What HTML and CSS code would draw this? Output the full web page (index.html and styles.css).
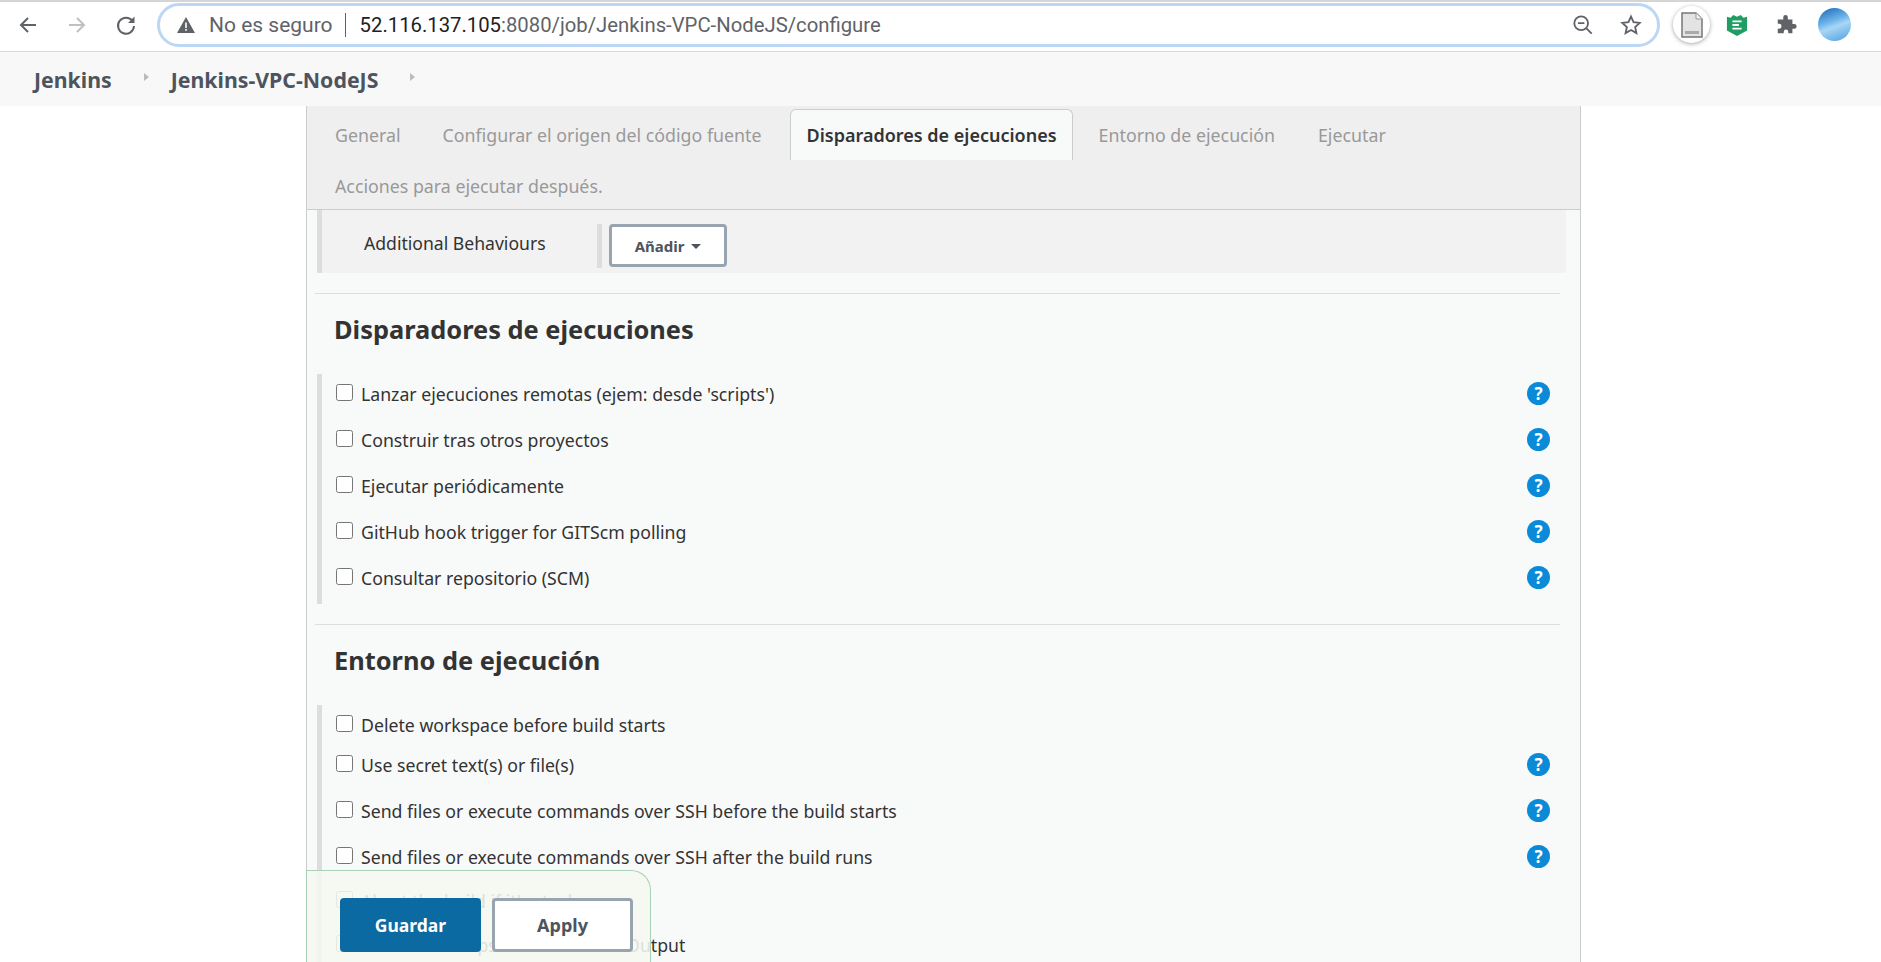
FILE: index.html
```html
<!DOCTYPE html>
<html lang="en">

<head>
    <meta charset="UTF-8">
    <meta name="viewport" content="width=device-width, initial-scale=1.0">
    <title>Jenkins-VPC-NodeJS Config</title>
    <link rel="stylesheet" href="styles.css">
</head>

<body>

    <!-- Browser toolbar -->
    <div class="toolbar">
        <svg class="nav-icon" viewBox="0 0 24 24"><path d="M20 12H5M12 5l-7 7 7 7" fill="none" stroke="#5f6368" stroke-width="2"/></svg>
        <svg class="nav-icon" viewBox="0 0 24 24"><path d="M4 12h15M12 5l7 7-7 7" fill="none" stroke="#bdc1c6" stroke-width="2"/></svg>
        <svg class="nav-icon" viewBox="0 0 24 24"><path d="M18.5 8A8 8 0 1 0 20 13" fill="none" stroke="#5f6368" stroke-width="2"/><path d="M20.5 3.5v6.5H14z" fill="#5f6368"/></svg>

        <div class="omnibox">
            <svg class="warn-icon" viewBox="0 0 20 18"><path d="M10 1l9 16H1z" fill="#5f6368"/><path d="M9.2 6.5h1.6v5.5H9.2zM9.2 13h1.6v1.7H9.2z" fill="#fff"/></svg>
            <span class="not-secure">No es seguro</span>
            <span class="omni-sep"></span>
            <span class="url"><b>52.116.137.105</b>:8080/job/Jenkins-VPC-NodeJS/configure</span>
            <svg class="omni-icon zoom-icon" viewBox="0 0 24 24"><circle cx="10" cy="10" r="7.5" fill="none" stroke="#5f6368" stroke-width="2"/><path d="M6.5 10h7M15.5 15.5l6 6" fill="none" stroke="#5f6368" stroke-width="2"/></svg>
            <svg class="omni-icon" viewBox="0 0 24 24"><path d="M12 2.8l2.8 6.2 6.7.7-5 4.5 1.4 6.6-5.9-3.4-5.9 3.4 1.4-6.6-5-4.5 6.700-.7z" fill="none" stroke="#5f6368" stroke-width="2"/></svg>
        </div>

        <div class="ext-bubble">
            <svg class="ext-doc" viewBox="0 0 22 26"><path d="M1 1h14l6 6v18H1z" fill="#e3e3e3" stroke="#777" stroke-width="1.5"/><path d="M15 1v6h6" fill="#f2f2f2" stroke="#999"/><path d="M4 19h14v3H4z" fill="#aaa"/></svg>
        </div>
        <svg class="ext-icon" viewBox="0 0 24 26"><path d="M1 4l4 1 3-3 4 2 4-2 3 3 4-1v15l-11 6-11-6z" fill="#1f9d63"/><path d="M7 9h10M7 13h7M7 17h10" stroke="#fff" stroke-width="2"/></svg>
        <svg class="ext-icon puzzle" viewBox="0 0 24 24"><path d="M9 3.5a2.5 2.5 0 0 1 5 0V6h5v5h2a2.6 2.6 0 0 1 0 5.200h-2V21h-4.500v-1.500a2.500 2.500 0 0 0-5 0V21H3v-5h1.500a2.700 2.700 0 0 0 0-5.400H3V6h6z" fill="#5f6368"/></svg>
        <div class="avatar"></div>
    </div>

    <!-- Jenkins breadcrumbs -->
    <div class="breadcrumbs">
        <a class="crumb">Jenkins</a>
        <span class="crumb-arrow"></span>
        <a class="crumb">Jenkins-VPC-NodeJS</a>
        <span class="crumb-arrow"></span>
    </div>

    <div class="config-panel">
        <div class="tabs">
            <a class="tab">General</a>
            <a class="tab">Configurar el origen del código fuente</a>
            <a class="tab active">Disparadores de ejecuciones</a>
            <a class="tab">Entorno de ejecución</a>
            <a class="tab">Ejecutar</a>
            <a class="tab">Acciones para ejecutar después.</a>
        </div>

        <div class="behaviours">
            <span class="behaviours-label">Additional Behaviours</span>
            <div class="behaviours-action">
                <button class="btn-add">Añadir <span class="caret"></span></button>
            </div>
        </div>

        <div class="section first">
            <h2>Disparadores de ejecuciones</h2>
            <div class="options">
                <label class="option"><input type="checkbox"><span>Lanzar ejecuciones remotas (ejem: desde 'scripts')</span><i class="help">?</i></label>
                <label class="option"><input type="checkbox"><span>Construir tras otros proyectos</span><i class="help">?</i></label>
                <label class="option"><input type="checkbox"><span>Ejecutar periódicamente</span><i class="help">?</i></label>
                <label class="option"><input type="checkbox"><span>GitHub hook trigger for GITScm polling</span><i class="help">?</i></label>
                <label class="option"><input type="checkbox"><span>Consultar repositorio (SCM)</span><i class="help">?</i></label>
            </div>
        </div>

        <div class="section second">
            <h2>Entorno de ejecución</h2>
            <div class="options">
                <label class="option short"><input type="checkbox"><span>Delete workspace before build starts</span></label>
                <label class="option"><input type="checkbox"><span>Use secret text(s) or file(s)</span><i class="help">?</i></label>
                <label class="option"><input type="checkbox"><span>Send files or execute commands over SSH before the build starts</span><i class="help">?</i></label>
                <label class="option"><input type="checkbox"><span>Send files or execute commands over SSH after the build runs</span><i class="help">?</i></label>
                <label class="option tight"><input type="checkbox"><span>Abort the build if it's stuck</span></label>
                <label class="option"><input type="checkbox"><span>Add timestamps to the Console Output</span></label>
            </div>
        </div>
    </div>

    <!-- Sticky save bar over the form -->
    <div class="save-bar">
        <button class="btn-save">Guardar</button>
        <button class="btn-apply">Apply</button>
    </div>

</body>

</html>
```

FILE: styles.css
```css
html,
body {
    height: 962px;
    overflow: hidden;
}

body {
    margin: 0;
    background-color: white;
    font-family: "Noto Sans", sans-serif;
    color: #333;
    position: relative;
}

/* Browser toolbar */
.toolbar {
    height: 52px;
    padding-bottom: 4px;
    box-sizing: border-box;
    border-top: 2px solid #d5d5d5;
    border-bottom: 1px solid #d9d9d9;
    display: flex;
    align-items: center;
    padding-left: 16px;
    background-color: white;
}

.nav-icon {
    width: 24px;
    height: 24px;
    margin-right: 25px;
}

.omnibox {
    width: 1481px;
    height: 38px;
    margin-left: -6px;
    border: 3px solid #bcd7f6;
    border-radius: 22px;
    display: flex;
    align-items: center;
    padding-left: 16px;
    box-sizing: content-box;
    font-family: "Roboto", sans-serif;
    font-size: 20.3px;
}

.warn-icon {
    width: 20px;
    height: 18px;
    margin-right: 13px;
}

.not-secure {
    color: #5f6368;
    font-size: 21px;
}

.omni-sep {
    width: 1px;
    height: 24px;
    background-color: #5f6368;
    margin: 0 14px 0 12px;
}

.url {
    color: #5f6368;
    flex: 1;
}

.url b {
    color: #202124;
    font-weight: normal;
}

.omni-icon {
    width: 22px;
    height: 22px;
    margin-right: 15px;
}

.zoom-icon {
    margin-right: 26px;
}

.ext-bubble {
    width: 37px;
    height: 37px;
    margin-left: 13px;
    border-radius: 50%;
    box-shadow: 0 1px 4px rgba(0, 0, 0, 0.35);
    display: flex;
    align-items: center;
    justify-content: center;
}

.ext-doc {
    width: 22px;
    height: 26px;
}

.ext-icon {
    width: 22px;
    height: 24px;
    margin-left: 16px;
}

.ext-icon.puzzle {
    margin-left: 27px;
}

.avatar {
    width: 33px;
    height: 33px;
    margin-left: 21px;
    border-radius: 50%;
    background: linear-gradient(160deg, #1565b5 0%, #6db4ea 40%, #a9d6f5 55%, #4a9fe0 100%);
}

/* Breadcrumbs */
.breadcrumbs {
    height: 54px;
    background-color: #f8f8f8;
    display: flex;
    align-items: center;
    padding-left: 34px;
    box-sizing: border-box;
}

.crumb {
    font-size: 21.3px;
    font-weight: bold;
    color: #4d545d;
    margin-top: 1px;
}

.crumb-arrow {
    width: 0;
    height: 0;
    border-left: 5px solid #bbb;
    border-top: 4px solid transparent;
    border-bottom: 4px solid transparent;
    margin: -4px 22px 0 32px;
}

/* Config form */
.config-panel {
    width: 1273px;
    height: 860px;
    margin-left: 306px;
    border-left: 1px solid #ccc;
    border-right: 1px solid #ccc;
    background-color: #f8fafa;
}

.tabs {
    height: 104px;
    background-color: #efefef;
    border-bottom: 1px solid #ccc;
    display: flex;
    flex-wrap: wrap;
    align-content: flex-start;
    padding: 3px 0 0 12px;
    box-sizing: border-box;
}

.tab {
    height: 51px;
    line-height: 50px;
    padding: 0 15px;
    margin-right: 12px;
    font-size: 17.8px;
    color: #999;
    border: 1px solid transparent;
    border-bottom: none;
    box-sizing: border-box;
}

.tab:nth-child(1) {
    margin-right: 10px;
}

.tab:nth-child(2) {
    margin-right: 13px;
}

.tab:nth-child(4) {
    margin-right: 11px;
}

.tab.active {
    background-color: #f8fafa;
    border-color: #ccc;
    border-radius: 6px 6px 0 0;
    color: #333;
    font-size: 18px;
    font-weight: 600;
    margin-right: 10px;
}

.behaviours {
    width: 1249px;
    height: 63px;
    margin-left: 10px;
    background-color: #f2f2f2;
    border-left: 5px solid #ddd;
    box-sizing: border-box;
    display: flex;
}

.behaviours-label {
    width: 275px;
    padding: 21px 0 0 42px;
    box-sizing: border-box;
    font-size: 17.6px;
}

.behaviours-action {
    border-left: 5px solid #ddd;
    height: 44px;
    margin-top: 14px;
    padding-left: 7px;
}

.btn-add {
    width: 118px;
    height: 43px;
    background-color: white;
    border: 3px solid #98a5b1;
    border-radius: 4px;
    font-family: inherit;
    font-size: 15px;
    font-weight: bold;
    color: #4d545d;
    padding: 0;
}

.caret {
    display: inline-block;
    width: 0;
    height: 0;
    border-top: 5px solid #4d545d;
    border-left: 5px solid transparent;
    border-right: 5px solid transparent;
    margin-left: 3px;
    vertical-align: 3px;
}

.section {
    margin: 0 20px 0 8px;
    border-top: 1px solid #ddd;
    padding-top: 18px;
}

.section.first {
    margin-top: 20px;
    height: 331px;
    box-sizing: border-box;
}

h2 {
    margin: 0 0 28px 19px;
    font-size: 25.4px;
    line-height: 34px;
    font-weight: bold;
    color: #333;
}

.options {
    margin-left: 2px;
    border-left: 5px solid #ddd;
    padding-left: 14px;
}

.option {
    height: 46px;
    padding-bottom: 7px;
    box-sizing: border-box;
    display: flex;
    align-items: center;
    font-size: 17.7px;
    color: #333;
}

.option.short {
    height: 40px;
    padding-bottom: 0;
}

.option.tight {
    height: 42px;
}

.option input {
    width: 17px;
    height: 17px;
    margin: 0 8px 3px 0;
    accent-color: #0b6aa2;
}

.help {
    margin-left: auto;
    margin-right: 10px;
    width: 23px;
    height: 23px;
    border-radius: 50%;
    background-color: #0b8ad8;
    color: white;
    font-style: normal;
    font-weight: bold;
    font-size: 17px;
    line-height: 23px;
    text-align: center;
}

/* Save bar lies over the form */
.save-bar {
    position: absolute;
    left: 306px;
    bottom: 0;
    width: 345px;
    height: 92px;
    box-sizing: border-box;
    background-color: rgba(245, 247, 240, 0.88);
    border: 1px solid #a9d0b8;
    border-bottom: none;
    border-radius: 0 20px 0 0;
    display: flex;
    gap: 11px;
    padding: 27px 0 0 33px;
}

.btn-save,
.btn-apply {
    width: 141px;
    height: 54px;
    font-family: inherit;
    font-size: 17.5px;
    font-weight: bold;
    border-radius: 4px;
}

.btn-save {
    background-color: #0b6aa2;
    color: white;
    border: none;
}

.btn-apply {
    background-color: white;
    color: #4d545d;
    border: 3px solid #98a5b1;
    font-size: 18px;
}
```
